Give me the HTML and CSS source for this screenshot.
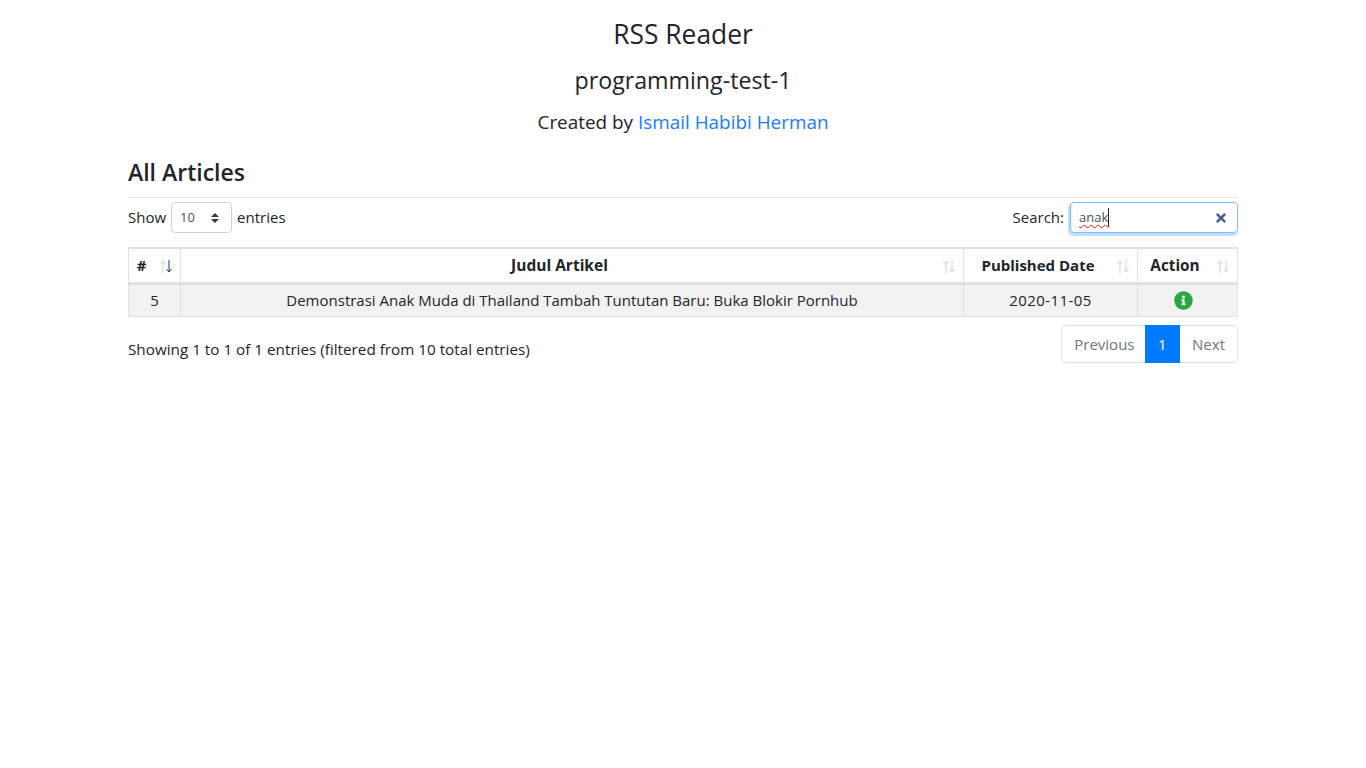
FILE: index.html
```html
<!DOCTYPE html>
<html lang="id">
<head>
  <meta charset="UTF-8">
  <title>RSS Reader</title>
  <link rel="stylesheet" href="styles.css">
</head>
<body>
<div class="container">
  <header class="page-head">
    <h1>RSS Reader</h1>
    <h2>programming-test-1</h2>
    <h3>Created by <a href="#">Ismail Habibi Herman</a></h3>
  </header>

  <h4 class="section-title">All Articles</h4>
  <hr>

  <div class="table-top">
    <label class="length">Show
      <select class="custom-select">
        <option>10</option>
      </select>
      entries</label>
    <div class="filter">
      <span>Search:</span>
      <div class="search-box">
        <span class="typed">anak</span>
        <svg class="clear" viewBox="0 0 352 512"><path d="M242.72 256l100.07-100.07c12.28-12.28 12.28-32.19 0-44.48l-22.24-22.24c-12.28-12.28-32.19-12.28-44.48 0L176 189.28 75.93 89.21c-12.28-12.28-32.19-12.28-44.48 0L9.21 111.45c-12.28 12.28-12.28 32.19 0 44.48L109.28 256 9.21 356.07c-12.28 12.28-12.28 32.19 0 44.48l22.24 22.24c12.28 12.28 32.2 12.28 44.48 0L176 322.72l100.07 100.07c12.28 12.28 32.2 12.28 44.48 0l22.24-22.24c12.28-12.28 12.28-32.19 0-44.48L242.72 256z"/></svg>
      </div>
    </div>
  </div>

  <table class="articles">
    <thead>
      <tr>
        <th class="col-no sorting sort-asc">#</th>
        <th class="col-title sorting">Judul Artikel</th>
        <th class="col-date sorting">Published Date</th>
        <th class="col-action sorting">Action</th>
      </tr>
    </thead>
    <tbody>
      <tr>
        <td>5</td>
        <td>Demonstrasi Anak Muda di Thailand Tambah Tuntutan Baru: Buka Blokir Pornhub</td>
        <td class="date-cell">2020-11-05</td>
        <td class="action-cell">
          <svg class="info" viewBox="0 0 512 512"><path d="M256 8C119.043 8 8 119.083 8 256c0 136.997 111.043 248 248 248s248-111.003 248-248C504 119.083 392.957 8 256 8zm0 110c23.196 0 42 18.804 42 42s-18.804 42-42 42-42-18.804-42-42 18.804-42 42-42zm56 254c0 6.627-5.373 12-12 12h-88c-6.627 0-12-5.373-12-12v-24c0-6.627 5.373-12 12-12h12v-64h-12c-6.627 0-12-5.373-12-12v-24c0-6.627 5.373-12 12-12h64c6.627 0 12 5.373 12 12v100h12c6.627 0 12 5.373 12 12v24z"/></svg>
        </td>
      </tr>
    </tbody>
  </table>

  <div class="table-bottom">
    <div class="info-text">Showing 1 to 1 of 1 entries (filtered from 10 total entries)</div>
    <ul class="pagination">
      <li class="page-item prev">Previous</li>
      <li class="page-item active">1</li>
      <li class="page-item">Next</li>
    </ul>
  </div>
</div>
</body>
</html>
```

FILE: styles.css
```css
* {
  box-sizing: border-box;
}
body {
  margin: 0;
  font-family: "Open Sans", "Noto Sans", sans-serif;
  font-size: 15px;
  line-height: 1.5;
  color: #212529;
  background: #fff;
}
.container {
  width: 1140px;
  margin: 0 auto;
  padding: 0 15px;
}
.page-head {
  text-align: center;
  padding-top: 19px;
}
h1, h2, h3, h4 {
  margin: 0;
  font-weight: 400;
  line-height: 1.2;
}
h1 {
  font-size: 26.4px;
  height: 34px;
  margin-bottom: 14px;
}
h2 {
  font-size: 23.2px;
  height: 29px;
  margin-bottom: 15px;
}
h3 {
  font-size: 18.9px;
  height: 24px;
}
a {
  color: #1a7bff;
  text-decoration: none;
}
.section-title {
  font-size: 23px;
  font-weight: 600;
  margin-top: 24px;
  height: 29px;
}
hr {
  border: 0;
  border-top: 1px solid #e3e5e8;
  margin: 9px 0 0;
}
.table-top {
  display: flex;
  justify-content: space-between;
  align-items: flex-start;
  margin-top: 4px;
}
.length {
  display: flex;
  align-items: center;
  gap: 5px;
  height: 31px;
}
.custom-select {
  appearance: none;
  width: 61px;
  height: 31px;
  padding: 0 20px 0 8px;
  font: inherit;
  font-size: 13px;
  color: #495057;
  border: 1px solid #ced4da;
  border-radius: 4px;
  background: #fff url("data:image/svg+xml,%3csvg xmlns='http://www.w3.org/2000/svg' width='8' height='10' viewBox='0 0 4 5'%3e%3cpath fill='%23343a40' d='M2 0L0 2h4zm0 5L0 3h4z'/%3e%3c/svg%3e") no-repeat right 12px center;
}
.filter {
  display: flex;
  align-items: center;
  gap: 6px;
}
.search-box {
  display: flex;
  align-items: center;
  justify-content: space-between;
  width: 168px;
  height: 31px;
  padding: 0 11px 0 8px;
  font-size: 13px;
  color: #495057;
  border: 1px solid #80bdff;
  border-radius: 4px;
  box-shadow: -1px 2px 0 1px rgba(0, 123, 255, .25);
  clip-path: inset(0 0 -3px -3px);
}
.typed {
  border-right: 1px solid #212529;
  text-decoration: underline wavy #e02020 1px;
  text-underline-offset: 2px;
}
.clear {
  width: 10px;
  height: 14px;
  fill: #4a5f8f;
}
.articles {
  width: 1110px;
  margin-top: 14px;
  border-collapse: collapse;
  table-layout: fixed;
  border: 1px solid #dee2e6;
  border-top-width: 2px;
}
.articles th, .articles td {
  border: 1px solid #dee2e6;
  text-align: center;
  height: 33px;
  padding: 0;
}
.articles th {
  position: relative;
  height: 35px;
  font-weight: 700;
  border-bottom-width: 3px;
  padding-right: 25px;
}
.articles .col-no {
  padding-right: 26px;
}
.articles .col-title {
  font-size: 15.5px;
}
.articles .col-action {
  padding-right: 25px;
  font-size: 15.3px;
}
.articles tbody tr {
  background: #f2f2f2;
}
.col-no { width: 52px; }
.col-title { width: 783px; }
.col-date { width: 174px; }
.col-action { width: 100px; }
.articles .date-cell {
  letter-spacing: .4px;
}
.articles .action-cell {
  padding-right: 9px;
}
/* sort arrows */
.sorting::before, .sorting::after {
  content: "";
  position: absolute;
  top: 11px;
  width: 6px;
  height: 13px;
  background-repeat: no-repeat;
}
.sorting::before {
  right: 14px;
  background-image: url("data:image/svg+xml,%3csvg xmlns='http://www.w3.org/2000/svg' width='6' height='13'%3e%3cpath fill='none' stroke='%23cfd2d5' d='M3 13V1M.5 4L3 1l2.5 3'/%3e%3c/svg%3e");
}
.sorting::after {
  right: 8px;
  background-image: url("data:image/svg+xml,%3csvg xmlns='http://www.w3.org/2000/svg' width='6' height='13'%3e%3cpath fill='none' stroke='%23cfd2d5' d='M3 0v12M.5 9L3 12l2.5-3'/%3e%3c/svg%3e");
}
.sort-asc::after {
  background-image: url("data:image/svg+xml,%3csvg xmlns='http://www.w3.org/2000/svg' width='6' height='13'%3e%3cpath fill='none' stroke='%231a3a6a' d='M3 0v12M.5 9L3 12l2.5-3'/%3e%3c/svg%3e");
}
.info {
  display: block;
  width: 19px;
  height: 19px;
  margin: 0 auto;
  fill: #28a745;
}
.table-bottom {
  display: flex;
  justify-content: space-between;
  margin-top: 8px;
}
.info-text {
  padding-top: 13px;
  font-size: 15.25px;
}
.pagination {
  display: flex;
  list-style: none;
  margin: 0;
  padding: 0;
  height: 38px;
  color: #6c757d;
  border: 1px solid #dee2e6;
  border-radius: 4px;
}
.page-item {
  padding: 0 12px;
  line-height: 36px;
}
.page-item.prev {
  padding-right: 10px;
}
.page-item.active {
  margin: -1px 0;
  height: 38px;
  padding: 0 13.5px;
  line-height: 38px;
  color: #fff;
  background: #007bff;
}
```
